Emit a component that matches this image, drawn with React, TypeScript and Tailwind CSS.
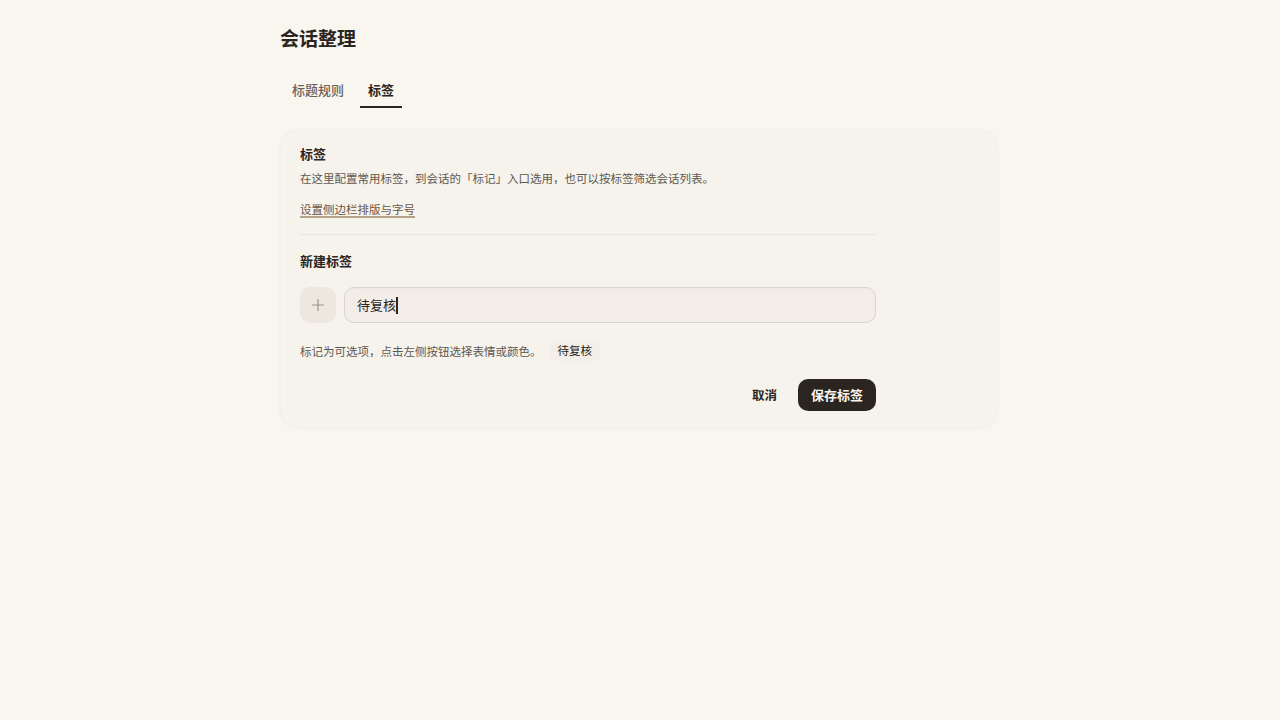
import React from "react";

const font = { fontFamily: '"Noto Sans CJK SC", "Noto Sans", sans-serif' };

export default function App() {
  return (
    <div className="min-h-screen w-full bg-[#f9f6f0] text-[#2a2520]" style={font}>
      <div className="mx-auto w-[720px] pt-[24px]">
        <h1 className="text-[19px] leading-[28px] font-bold text-[#2a2520]">会话整理</h1>

        <div className="mt-[22px] flex gap-[8px] pl-[4px]">
          <button className="h-[34px] px-2 border-b-2 border-transparent text-[13px] font-medium text-[#6b635b]">
            标题规则
          </button>
          <button className="h-[34px] px-2 border-b-2 border-[#2a2520] text-[13px] font-semibold text-[#2a2520]">
            标签
          </button>
        </div>

        <div className="mt-[21px] w-[718px] rounded-[18px] bg-[#f6f3ed] border border-[#f3efe9] shadow-[0_1px_4px_rgba(60,40,20,0.03)] pl-[19px] pr-[20px] pt-[14px] pb-[16px]">
          <div className="w-[576px]">
            <div className="text-[13px] leading-[20px] font-semibold text-[#2a2520]">标签</div>
            <div className="mt-[5px] text-[11.5px] leading-[18px] text-[#5f5850]">
              在这里配置常用标签，到会话的「标记」入口选用，也可以按标签筛选会话列表。
            </div>
            <div className="mt-[15px] flex">
              <span className="block text-[11.5px] leading-[14px] text-[#6a5641] border-b-2 border-[#b5a28a]">
                设置侧边栏排版与字号
              </span>
            </div>
            <div className="mt-[16px] h-px bg-[#ebe5dd]" />

            <div className="mt-[16px] text-[13px] leading-[20px] font-semibold text-[#2a2520]">新建标签</div>

            <div className="mt-[16px] flex items-center gap-[8px]">
              <div className="flex h-[36px] w-[36px] shrink-0 items-center justify-center rounded-[10px] bg-[#ede7e0]">
                <svg width="14" height="14" viewBox="0 0 14 14" fill="none">
                  <path d="M7 1.5v11M1.5 7h11" stroke="#9b948b" strokeWidth="1.2" strokeLinecap="round" />
                </svg>
              </div>
              <div className="flex h-[36px] flex-1 items-center rounded-[10px] border border-[#d9d3cb] bg-[#f2ede7] px-[12px] shadow-[inset_0_1px_1px_rgba(0,0,0,0.02)]">
                <span className="text-[13px] leading-[20px] text-[#2a2520]">待复核</span>
                <span className="inline-block h-[17px] w-[1.5px] bg-[#2a2520]" />
              </div>
            </div>

            <div className="mt-[18px] flex items-center">
              <span className="text-[11.5px] leading-[18px] text-[#5f5850]">标记为可选项，点击左侧按钮选择表情或颜色。</span>
              <span className="ml-[8px] inline-flex h-[20px] items-center rounded-[6px] bg-[#f3eee8] px-[8px] text-[11.5px] font-normal text-[#1f1a16]">
                待复核
              </span>
            </div>

            <div className="mt-[18px] flex items-center justify-end gap-[8px]">
              <button className="h-[32px] px-[13px] text-[12.5px] font-bold text-[#2a2520]">取消</button>
              <button className="h-[32px] rounded-[10px] bg-[#2a2520] px-[13px] text-[13px] font-bold text-[#f9f6f0]">
                保存标签
              </button>
            </div>
          </div>
        </div>
      </div>
    </div>
  );
}
